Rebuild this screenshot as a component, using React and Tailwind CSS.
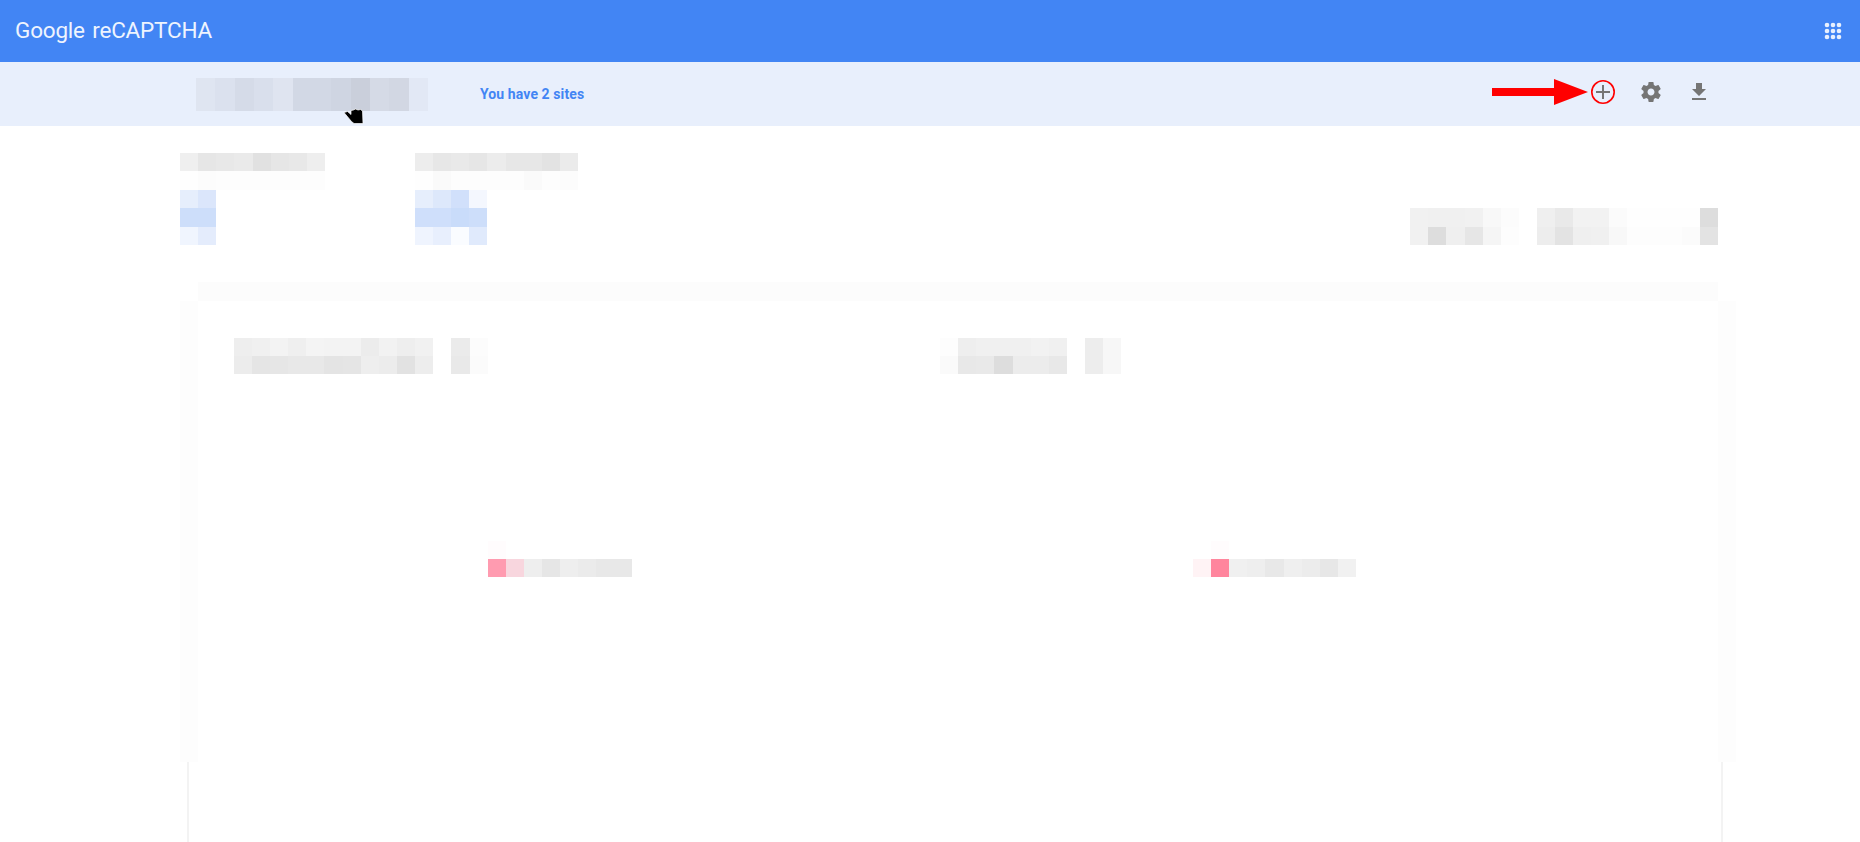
const Mosaic = ({ rows, className }) => (
  <div className={`flex flex-col shrink-0 ${className}`}>
    {rows.map((row, i) => (
      <div key={i} className="flex flex-1">
        {row.map((cell, j) => (
          <div key={j} className={`flex-1 ${cell}`} />
        ))}
      </div>
    ))}
  </div>
);

const accountBar = [
  ["bg-[#dfe5f1]", "bg-[#dbe1ee]", "bg-[#d5dbe8]", "bg-[#d9dfec]", "bg-[#dfe4f0]", "bg-[#d2d8e5]", "bg-[#d2d8e5]", "bg-[#cfd5e2]", "bg-[#cacfdb]", "bg-[#d5dae6]", "bg-[#d2d7e3]", "bg-[#e2e8f5]"],
];

const statOne = [
  ["bg-[#efefef]", "bg-[#e6e6e6]", "bg-[#e8e8e8]", "bg-[#eaeaea]", "bg-[#e1e1e1]", "bg-[#e6e6e6]", "bg-[#e8e8e8]", "bg-[#eeeeee]"],
  ["bg-[#fefefe]", "bg-[#fcfcfc]", "bg-[#fdfdfd]", "bg-[#fdfdfd]", "bg-[#fdfdfd]", "bg-[#fdfdfd]", "bg-[#fdfdfd]", "bg-[#fdfdfd]"],
  ["bg-[#e6eefc]", "bg-[#dbe6fb]", "bg-white", "bg-white", "bg-white", "bg-white", "bg-white", "bg-white"],
  ["bg-[#cddefa]", "bg-[#cddefa]", "bg-white", "bg-white", "bg-white", "bg-white", "bg-white", "bg-white"],
  ["bg-[#f0f5fe]", "bg-[#e4ecfc]", "bg-white", "bg-white", "bg-white", "bg-white", "bg-white", "bg-white"],
];

const statTwo = [
  ["bg-[#ededed]", "bg-[#e7e7e7]", "bg-[#e9e9e9]", "bg-[#e6e6e6]", "bg-[#ececec]", "bg-[#e7e7e7]", "bg-[#e7e7e7]", "bg-[#e3e3e3]", "bg-[#ebebeb]"],
  ["bg-[#fefefe]", "bg-[#fafafa]", "bg-[#fdfdfd]", "bg-[#fdfdfd]", "bg-[#fdfdfd]", "bg-[#fdfdfd]", "bg-[#fafafa]", "bg-[#fdfdfd]", "bg-[#fcfcfc]"],
  ["bg-[#e6eefc]", "bg-[#dde8fb]", "bg-[#d1e0fb]", "bg-[#f4f7fe]", "bg-white", "bg-white", "bg-white", "bg-white", "bg-white"],
  ["bg-[#cfdffb]", "bg-[#cfdffb]", "bg-[#c9dcfa]", "bg-[#cddefa]", "bg-white", "bg-white", "bg-white", "bg-white", "bg-white"],
  ["bg-[#eff4fe]", "bg-[#e8effd]", "bg-[#fafcff]", "bg-[#e0eafc]", "bg-white", "bg-white", "bg-white", "bg-white", "bg-white"],
];

const rangeOne = [
  ["bg-[#f1f1f1]", "bg-[#f0f0f0]", "bg-[#f0f0f0]", "bg-[#f1f1f1]", "bg-[#f8f8f8]", "bg-[#fcfcfc]"],
  ["bg-[#f1f1f1]", "bg-[#dddddd]", "bg-[#efefef]", "bg-[#e6e6e6]", "bg-[#f5f5f5]", "bg-[#fdfdfd]"],
];

const rangeTwo = [
  ["bg-[#efefef]", "bg-[#e9e9e9]", "bg-[#f2f2f2]", "bg-[#f2f2f2]", "bg-[#fbfbfb]", "bg-[#fefefe]", "bg-[#fefefe]", "bg-[#fefefe]", "bg-[#fefefe]", "bg-[#dddddd]"],
  ["bg-[#ededed]", "bg-[#e3e3e3]", "bg-[#efefef]", "bg-[#f0f0f0]", "bg-[#f8f8f8]", "bg-[#fdfdfd]", "bg-[#fdfdfd]", "bg-[#fdfdfd]", "bg-[#fbfbfb]", "bg-[#e3e3e3]"],
];

const leftTitle = [
  ["bg-[#eeeeee]", "bg-[#f0f0f0]", "bg-[#f3f3f3]", "bg-[#efefef]", "bg-[#f4f4f4]", "bg-[#f3f3f3]", "bg-[#f3f3f3]", "bg-[#ececec]", "bg-[#f2f2f2]", "bg-[#eeeeee]", "bg-[#f1f1f1]"],
  ["bg-[#ececec]", "bg-[#e5e5e5]", "bg-[#e6e6e6]", "bg-[#e8e8e8]", "bg-[#e8e8e8]", "bg-[#e4e4e4]", "bg-[#e5e5e5]", "bg-[#eeeeee]", "bg-[#ececec]", "bg-[#e2e2e2]", "bg-[#ededed]"],
];

const leftBadge = [
  ["bg-[#ebebeb]", "bg-[#fcfcfc]"],
  ["bg-[#e9e9e9]", "bg-[#fbfbfb]"],
];

const rightTitle = [
  ["bg-[#fdfdfd]", "bg-[#eeeeee]", "bg-[#f0f0f0]", "bg-[#f0f0f0]", "bg-[#f0f0f0]", "bg-[#f2f2f2]", "bg-[#f0f0f0]"],
  ["bg-[#fafafa]", "bg-[#e8e8e8]", "bg-[#e9e9e9]", "bg-[#dddddd]", "bg-[#ececec]", "bg-[#ececec]", "bg-[#e8e8e8]"],
];

const rightBadge = [
  ["bg-[#ededed]", "bg-[#f7f7f7]"],
  ["bg-[#ededed]", "bg-[#f7f7f7]"],
];

const leftEmpty = [
  ["bg-[#fffcfd]", "", "", "", "", "", "", ""],
  ["bg-[#ff9bb0]", "bg-[#f8d6de]", "bg-[#eeeeee]", "bg-[#e6e6e6]", "bg-[#eeeeee]", "bg-[#ebebeb]", "bg-[#e8e8e8]", "bg-[#e8e8e8]"],
];

const rightEmpty = [
  ["", "bg-[#fffcfd]", "", "", "", "", "", "", ""],
  ["bg-[#fff3f5]", "bg-[#ff859d]", "bg-[#f0f0f0]", "bg-[#eeeeee]", "bg-[#e8e8e8]", "bg-[#efefef]", "bg-[#ececec]", "bg-[#e7e7e7]", "bg-[#f1f1f1]"],
];

const AppsIcon = () => (
  <svg width="24" height="24" viewBox="0 0 24 24" fill="#e8f0fe">
    {[6, 12, 18].map((y) =>
      [6, 12, 18].map((x) => <circle key={`${x}-${y}`} cx={x} cy={y} r="2.3" />)
    )}
  </svg>
);

const AddIcon = () => (
  <svg width="24" height="24" viewBox="0 0 24 24" fill="none">
    <path d="M12 5v14M5 12h14" stroke="#757575" strokeWidth="2" />
    <circle cx="12" cy="12" r="11.2" stroke="#ff0000" strokeWidth="1.6" />
  </svg>
);

const SettingsIcon = () => (
  <svg width="24" height="24" viewBox="0 0 24 24" fill="#757575">
    <path d="M19.43 12.98c.04-.32.07-.64.07-.98s-.03-.66-.07-.98l2.11-1.65c.19-.15.24-.42.12-.64l-2-3.46c-.12-.22-.39-.3-.61-.22l-2.49 1c-.52-.4-1.08-.73-1.69-.98l-.38-2.65C14.46 2.18 14.25 2 14 2h-4c-.25 0-.46.18-.49.42l-.38 2.65c-.61.25-1.17.59-1.69.98l-2.49-1c-.23-.09-.49 0-.61.22l-2 3.46c-.13.22-.07.49.12.64l2.11 1.65c-.04.32-.07.65-.07.98s.03.66.07.98l-2.11 1.65c-.19.15-.24.42-.12.64l2 3.46c.12.22.39.3.61.22l2.49-1c.52.4 1.08.73 1.69.98l.38 2.65c.03.24.24.42.49.42h4c.25 0 .46-.18.49-.42l.38-2.65c.61-.25 1.17-.59 1.69-.98l2.49 1c.23.09.49 0 .61-.22l2-3.46c.12-.22.07-.49-.12-.64l-2.11-1.65zM12 15.5c-1.93 0-3.5-1.57-3.5-3.5s1.57-3.5 3.5-3.5 3.5 1.57 3.5 3.5-1.57 3.5-3.5 3.5z" />
  </svg>
);

const DownloadIcon = () => (
  <svg width="24" height="24" viewBox="0 0 24 24" fill="#757575">
    <path d="M19 9h-4V3H9v6H5l7 7 7-7zM5 18v2h14v-2H5z" />
  </svg>
);

const Arrow = () => (
  <svg width="96" height="26" viewBox="0 0 96 26" fill="#ff0000" className="mr-[3px]">
    <path d="M0 9h62V0l34 13-34 13v-9H0z" />
  </svg>
);

const HandCursor = () => (
  <svg width="22" height="18" viewBox="0 0 22 18" className="absolute left-[343px] top-[108px]">
    <path
      d="M1 4.5 4.5 3.5 8 6.5V2.5L10.5 2 12.5 1 15 2 17.5 1.5 19.5 3 20 15.5H11L8.5 13.5Z"
      fill="#000000"
      stroke="#ffffff"
      strokeWidth="0.7"
    />
  </svg>
);

export default function App() {
  return (
    <div className="relative h-screen overflow-hidden bg-white font-['Roboto',sans-serif]">
      {/* Header */}
      <header className="h-[62px] bg-[#4285f4] flex items-center justify-between px-[15px]">
        <div className="text-[22.5px] text-[#eef4fe] font-normal tracking-[-0.2px] [word-spacing:2px]">
          Google reCAPTCHA
        </div>
        <AppsIcon />
      </header>

      {/* Site bar */}
      <div className="h-[64px] bg-[#e8effc] flex items-center pl-[196px] pr-[149px]">
        <Mosaic rows={accountBar} className="w-[232px] h-[33px]" />
        <span className="ml-[52px] text-[14px] font-bold tracking-[0.1px] text-[#4285f4]">You have 2 sites</span>
        <div className="ml-auto flex items-center pb-1">
          <Arrow />
          <div className="flex items-center gap-6">
            <AddIcon />
            <SettingsIcon />
            <DownloadIcon />
          </div>
        </div>
      </div>
      <HandCursor />

      {/* Summary */}
      <div className="ml-[180px] w-[1538px] pt-[27px] flex items-end">
        <Mosaic rows={statOne} className="w-[145px] h-[92px]" />
        <Mosaic rows={statTwo} className="w-[163px] h-[92px] ml-[90px]" />
        <div className="ml-auto flex gap-[18px]">
          <Mosaic rows={rangeOne} className="w-[109px] h-[37px]" />
          <Mosaic rows={rangeTwo} className="w-[181px] h-[37px]" />
        </div>
      </div>

      {/* Chart card */}
      <div className="ml-[180px] w-[1556px] mt-[37px]">
        <div className="mx-[18px] h-[19px] bg-[#fcfcfc]" />
        <div className="h-[461px] border-x-[18px] border-[#fdfdfd] bg-white flex">
          <div className="w-[706px] pl-[36px] pt-[37px]">
            <div className="flex gap-[18px]">
              <Mosaic rows={leftTitle} className="w-[199px] h-[36px]" />
              <Mosaic rows={leftBadge} className="w-[37px] h-[36px]" />
            </div>
            <Mosaic rows={leftEmpty} className="w-[144px] h-[36px] mt-[167px] ml-[254px]" />
          </div>
          <div className="flex-1 pl-[36px] pt-[37px]">
            <div className="flex gap-[18px]">
              <Mosaic rows={rightTitle} className="w-[127px] h-[36px]" />
              <Mosaic rows={rightBadge} className="w-[36px] h-[36px]" />
            </div>
            <Mosaic rows={rightEmpty} className="w-[163px] h-[36px] mt-[167px] ml-[253px]" />
          </div>
        </div>
        <div className="ml-[7px] mr-[13px] h-[80px] border-x-2 border-[#f3f3f3]" />
      </div>
    </div>
  );
}
